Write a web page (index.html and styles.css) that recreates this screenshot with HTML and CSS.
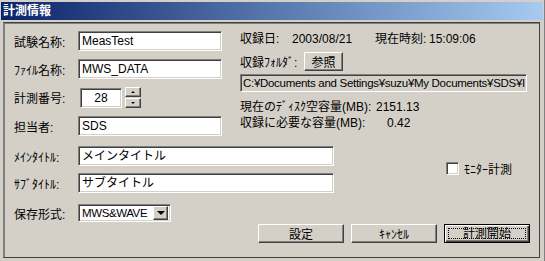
FILE: index.html
```html
<!DOCTYPE html>
<html lang="ja">
<head>
  <meta charset="UTF-8" />
  <title>計測情報</title>
  <link rel="stylesheet" href="styles.css">
</head>
<body>
  <div class="window">
    <div class="titlebar">計測情報</div>
    <div class="panel">
      <div class="upper">
        <div class="form">
          <label>試験名称:</label>
          <div class="edit wide">MeasTest</div>
          <label>ﾌｧｲﾙ名称:</label>
          <div class="edit wide">MWS_DATA</div>
          <label>計測番号:</label>
          <div class="spin">
            <div class="edit num">28</div>
            <div class="spin-btns">
              <div class="btn tiny"><span class="tri up"></span></div>
              <div class="btn tiny"><span class="tri down"></span></div>
            </div>
          </div>
          <label>担当者:</label>
          <div class="edit wide">SDS</div>
        </div>

        <div class="info">
          <div class="line">
            <span class="w52">収録日:</span><span class="w83">2003/08/21</span><span class="w54">現在時刻:</span><span>15:09:06</span>
          </div>
          <div class="folder">
            <span class="w64">収録ﾌｫﾙﾀﾞ:</span>
            <button class="btn ref">参照</button>
          </div>
          <div class="edit path">C:¥Documents and Settings¥suzu¥My Documents¥SDS¥I</div>
          <div class="line disk">
            <span class="w136">現在のﾃﾞｨｽｸ空容量(MB):</span><span>2151.13</span>
          </div>
          <div class="line">
            <span class="w147">収録に必要な容量(MB):</span><span>0.42</span>
          </div>
        </div>
      </div>

      <div class="lower">
        <label>ﾒｲﾝﾀｲﾄﾙ:</label>
        <div class="edit long">メインタイトル</div>
        <div class="check">
          <span class="box"></span>
          <span>ﾓﾆﾀｰ計測</span>
        </div>
        <label>ｻﾌﾞﾀｲﾄﾙ:</label>
        <div class="edit long">サブタイトル</div>
        <label class="sel-label">保存形式:</label>
        <div class="edit select">
          <span class="sel-text">MWS&amp;WAVE</span>
          <div class="btn drop"><span class="tri down"></span></div>
        </div>
      </div>

      <div class="actions">
        <button class="btn act">設定</button>
        <button class="btn act">ｷｬﾝｾﾙ</button>
        <button class="btn act default"><span class="focus">計測開始</span></button>
      </div>
    </div>
  </div>
</body>
</html>
```

FILE: styles.css
```css
body {
  margin: 0;
  font-family: "Liberation Sans", "Noto Sans CJK JP", sans-serif;
  font-size: 12px;
  color: #000;
  background: #d4d0c8;
}
.window {
  width: 545px;
  height: 261px;
  box-sizing: border-box;
  background: #d4d0c8;
  padding: 2px 1px 0 1px;
  border-right: 1px solid #808080;
}
.titlebar {
  height: 18px;
  line-height: 18px;
  padding-left: 2px;
  color: #fff;
  font-weight: bold;
  font-size: 12px;
  background: linear-gradient(to right, #0a246a, #a6caf0);
}
.panel {
  margin: 2px 3px 0 2px;
  height: 236px;
  box-sizing: border-box;
  border: 1px solid #404040;
  border-left-color: #808080;
  box-shadow: inset 1px 1px #808080;
  padding: 8px 9px 0 10px;
}
.upper {
  display: flex;
}
.form, .lower {
  display: grid;
  grid-template-columns: 64px auto;
  row-gap: 8px;
  align-items: center;
}
.form label, .lower label {
  white-space: nowrap;
}
.edit {
  height: 20px;
  box-sizing: border-box;
  background: #fff;
  border: 1px solid;
  border-color: #808080 #fff #fff #808080;
  box-shadow: inset 1px 1px #404040, inset -1px -1px #d4d0c8;
  padding: 0 3px;
  line-height: 18px;
  white-space: nowrap;
  overflow: hidden;
}
.wide { width: 144px; }
.long { width: 256px; }
.spin {
  display: flex;
  align-items: center;
  gap: 3px;
  padding-left: 2px;
}
.num {
  width: 42px;
  text-align: center;
}
.spin-btns {
  display: flex;
  flex-direction: column;
  gap: 1px;
}
.btn {
  font: inherit;
  color: #000;
  background: #d4d0c8;
  border: 1px solid;
  border-color: #fff #404040 #404040 #fff;
  box-shadow: inset -1px -1px #808080;
  padding: 0;
  box-sizing: border-box;
}
.tiny {
  width: 16px;
  height: 10px;
  display: flex;
  align-items: center;
  justify-content: center;
}
.tri {
  width: 0;
  height: 0;
  border-left: 2px solid transparent;
  border-right: 2px solid transparent;
}
.tri.up { border-bottom: 2px solid #000; }
.tri.down { border-top: 2px solid #000; }
.info {
  margin-left: 18px;
  display: flex;
  flex-direction: column;
}
.line {
  height: 16px;
  line-height: 16px;
  white-space: nowrap;
}
.line span, .folder span { display: inline-block; }
.w52 { width: 52px; }
.w83 { width: 83px; }
.w54 { width: 54px; }
.w64 { width: 64px; }
.w136 { width: 136px; }
.w147 { width: 147px; }
.folder {
  display: flex;
  align-items: center;
  margin-top: 5px;
  height: 19px;
}
.ref {
  width: 39px;
  height: 19px;
}
.path {
  margin-top: 3px;
  width: 287px;
  height: 18px;
  line-height: 16px;
  background: #d4d0c8;
  padding: 0 2px;
  font-size: 11.5px;
  letter-spacing: -0.3px;
}
.disk { margin-top: 7px; }
.lower {
  margin-top: 10px;
  grid-template-columns: 64px 256px auto;
  row-gap: 7px;
}
.check {
  grid-row: 1 / 3;
  grid-column: 3;
  align-self: center;
  margin-left: 112px;
  display: flex;
  align-items: center;
  gap: 5px;
  padding-bottom: 2px;
}
.box {
  width: 13px;
  height: 13px;
  box-sizing: border-box;
  background: #fff;
  border: 1px solid;
  border-color: #808080 #fff #fff #808080;
  box-shadow: inset 1px 1px #404040, inset -1px -1px #d4d0c8;
}
.sel-label { margin-top: 4px; }
.select {
  margin-top: 4px;
  width: 93px;
  height: 18px;
  display: flex;
  align-items: center;
  justify-content: space-between;
  padding: 0 2px 0 3px;
  line-height: 16px;
}
.sel-text {
  font-size: 11.5px;
  letter-spacing: -0.4px;
}
.drop {
  width: 15px;
  height: 14px;
  display: flex;
  align-items: center;
  justify-content: center;
}
.drop .tri {
  border-left-width: 4px;
  border-right-width: 4px;
  border-top-width: 4px;
}
.actions {
  display: flex;
  justify-content: flex-end;
  gap: 7px;
  margin-top: 2px;
}
.act {
  width: 86px;
  height: 19px;
}
.default {
  outline: 1px solid #000;
  outline-offset: -1px;
  border-color: #000;
  box-shadow: inset 1px 1px #fff, inset -1px -1px #404040, inset -2px -2px #808080;
  padding: 3px;
}
.focus {
  display: block;
  height: 100%;
  box-sizing: border-box;
  border: 1px dotted #000;
  line-height: 11px;
}
```
